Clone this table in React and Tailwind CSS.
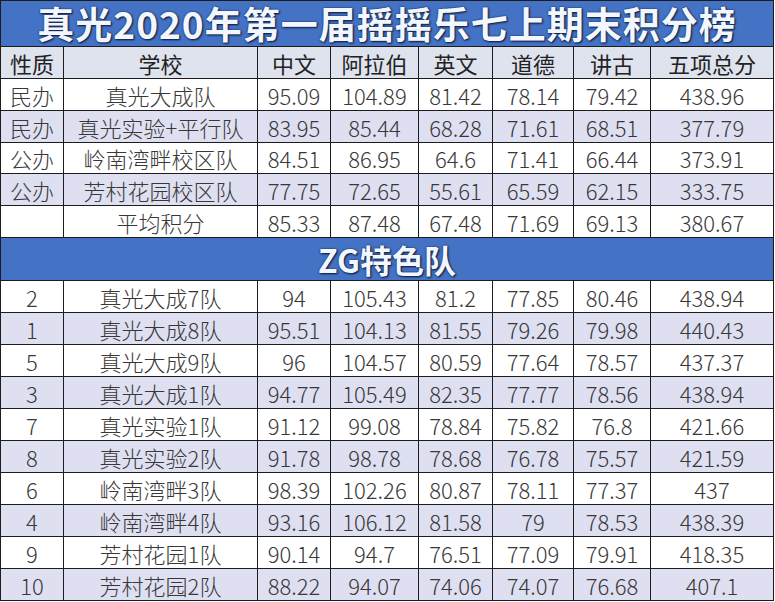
import React from "react";

const cols = "grid grid-cols-[62px_193px_72px_87px_73px_80px_76px_122px] gap-px";
const font = { fontFamily: '"Noto Sans CJK SC", "Noto Sans", sans-serif' };

const top = [
  ["民办", "真光大成队", "95.09", "104.89", "81.42", "78.14", "79.42", "438.96"],
  ["民办", "真光实验+平行队", "83.95", "85.44", "68.28", "71.61", "68.51", "377.79"],
  ["公办", "岭南湾畔校区队", "84.51", "86.95", "64.6", "71.41", "66.44", "373.91"],
  ["公办", "芳村花园校区队", "77.75", "72.65", "55.61", "65.59", "62.15", "333.75"],
  ["", "平均积分", "85.33", "87.48", "67.48", "71.69", "69.13", "380.67"],
];

const bottom = [
  ["2", "真光大成7队", "94", "105.43", "81.2", "77.85", "80.46", "438.94"],
  ["1", "真光大成8队", "95.51", "104.13", "81.55", "79.26", "79.98", "440.43"],
  ["5", "真光大成9队", "96", "104.57", "80.59", "77.64", "78.57", "437.37"],
  ["3", "真光大成1队", "94.77", "105.49", "82.35", "77.77", "78.56", "438.94"],
  ["7", "真光实验1队", "91.12", "99.08", "78.84", "75.82", "76.8", "421.66"],
  ["8", "真光实验2队", "91.78", "98.78", "78.68", "76.78", "75.57", "421.59"],
  ["6", "岭南湾畔3队", "98.39", "102.26", "80.87", "78.11", "77.37", "437"],
  ["4", "岭南湾畔4队", "93.16", "106.12", "81.58", "79", "78.53", "438.39"],
  ["9", "芳村花园1队", "90.14", "94.7", "76.51", "77.09", "79.91", "418.35"],
  ["10", "芳村花园2队", "88.22", "94.07", "74.06", "74.07", "76.68", "407.1"],
];

function Row({ cells, shaded, h = "h-[31px]", header }) {
  return (
    <div className={cols}>
      {cells.map((c, i) => (
        <div
          key={i}
          className={`${h} flex items-center justify-center text-[22px] leading-[24px] whitespace-nowrap overflow-hidden ${
            header ? "bg-[#dfe3ee] text-[#222] font-normal" : shaded ? "bg-[#dedff1] text-[#383838] font-light" : "bg-white text-[#383838] font-light"
          }`}
        >
          {c}
        </div>
      ))}
    </div>
  );
}

export default function App() {
  return (
    <div className="w-[775px] h-[602px] bg-white" style={font}>
      <div className="w-[774px] bg-[#1c1c1c] p-px flex flex-col gap-px">
        <div className="h-[45px] bg-[#4472c4] flex items-center justify-center">
          <span className="text-[37px] font-bold tracking-[1px] whitespace-nowrap text-[#f2f7ff] leading-[45px] [text-shadow:0_0_2px_#16264a,1px_1px_2px_#0b1630]">
            真光2020年第一届摇摇乐七上期末积分榜
          </span>
        </div>
        <Row cells={["性质", "学校", "中文", "阿拉伯", "英文", "道德", "讲古", "五项总分"]} header />
        {top.map((r, i) => (
          <Row key={i} cells={r} shaded={i % 2 === 1} h={i === 2 ? "h-[30px]" : "h-[31px]"} />
        ))}
        <div className="h-[42px] bg-[#4472c4] flex items-center justify-center">
          <span className="text-[32px] font-bold text-[#f2f7ff] leading-[38px] [text-shadow:0_0_2px_#16264a,1px_1px_2px_#0b1630]">
            ZG特色队
          </span>
        </div>
        {bottom.map((r, i) => (
          <Row key={i} cells={r} shaded={i % 2 === 1} />
        ))}
      </div>
    </div>
  );
}
